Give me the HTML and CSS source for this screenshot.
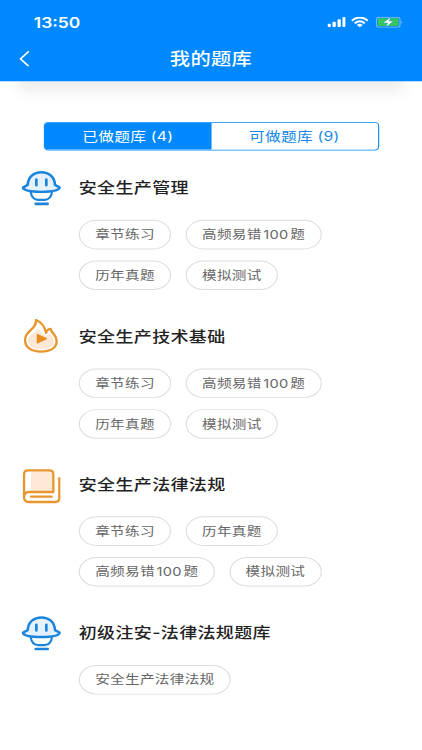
FILE: index.html
```
<!DOCTYPE html>
<html lang="zh-CN">
<head>
    <meta charset="UTF-8">
    <meta name="viewport" content="width=device-width, initial-scale=1.0">
    <title>我的题库</title>
    <link rel="stylesheet" href="styles.css">
</head>
<body>
    <svg class="sprite" width="0" height="0">
        <symbol id="robot" viewBox="0 0 120 114" preserveAspectRatio="none">
            <path d="M28 66 Q31 88 49 90 H71 Q89 88 92 66" fill="#fff" stroke="#1b84dc" stroke-width="6.500"/>
            <path d="M19 45 C20 20 38 7 60 7 S100 20 101 45 L116 53 Q111 66 60 66 T4 53 Z" fill="#e5f1fd" stroke="#1b84dc" stroke-width="7.500" stroke-linejoin="round"/>
            <path d="M45 29 V46 M75 29 V46" stroke="#1b84dc" stroke-width="8" stroke-linecap="round"/>
            <path d="M43 102 H79" stroke="#1b84dc" stroke-width="8" stroke-linecap="round"/>
        </symbol>
        <symbol id="fire" viewBox="0 0 120 114" preserveAspectRatio="none">
            <path d="M44 4 Q69 14 74 43 Q78 31 88 31 C90 44 106 49 106 68 C106 88 87 99 59 99 S11 87 11 64 C11 34 46 34 44 4 Z" fill="#fff" stroke="#e8962e" stroke-width="7" stroke-linejoin="round"/>
            <path d="M47 30 Q62 40 73 54 L86 43 Q97 55 98 69 C98 84 82 92 59 92 S20 85 19 67 C20 45 42 51 47 30 Z" fill="#fde9d6"/>
            <path d="M48 48 L75 60 L48 73 Z" fill="#e98d20" stroke="#e98d20" stroke-width="4" stroke-linejoin="round"/>
        </symbol>
        <symbol id="book" viewBox="0 0 120 114" preserveAspectRatio="none">
            <path d="M29 15 H93 V76 H29 Z" fill="#fde9d6"/>
            <path d="M8 90 V24 Q8 12 20 12 H84 Q96 12 96 24 V77 H22 Q8 77 8 92 Q8 107 22 107 H102 Q114 107 114 96 V35" fill="none" stroke="#e8962e" stroke-width="7" stroke-linecap="round" stroke-linejoin="round"/>
            <path d="M29 91 H91" stroke="#e8962e" stroke-width="7" stroke-linecap="round"/>
        </symbol>
    </svg>
    <div class="screen">
        <header class="header">
            <div class="statusBar">
                <span class="time">13:50</span>
                <svg class="signal" viewBox="0 0 56 33" preserveAspectRatio="none" fill="#fff">
                    <rect x="0" y="21" width="10" height="10" rx="3"/>
                    <rect x="15" y="15" width="10" height="16" rx="3"/>
                    <rect x="30" y="8" width="10" height="23" rx="3"/>
                    <rect x="45" y="1" width="10" height="30" rx="3"/>
                </svg>
                <svg class="wifi" viewBox="0 0 52 33" preserveAspectRatio="none" fill="none" stroke="#fff" stroke-width="6">
                    <path d="M2 12 Q26 -7 50 12"/>
                    <path d="M11 20 Q26 8 41 20"/>
                    <path d="M17 25 Q26 18 35 25 L26 32 Z" fill="#fff" stroke="none"/>
                </svg>
                <svg class="battery" viewBox="0 0 82 33" preserveAspectRatio="none">
                    <rect x="1.5" y="1.5" width="71" height="30" rx="8" fill="none" stroke="#7fbdf5" stroke-width="3"/>
                    <rect x="6" y="5" width="62" height="23" rx="4" fill="#35c75a"/>
                    <path d="M76 12 Q81 16.500 76 21 Z" fill="#7fbdf5"/>
                    <path d="M45 1 L21 19 H35 L30 32 L53 13 H40 Z" fill="#fff" stroke="#168fd8" stroke-width="1.500"/>
                </svg>
            </div>
            <div class="navBar">
                <svg class="back" viewBox="0 0 30 48" preserveAspectRatio="none">
                    <path d="M27 3 L4 24 L27 45" fill="none" stroke="#fff" stroke-width="5" stroke-linecap="round" stroke-linejoin="round"/>
                </svg>
                <h1 class="title">我的题库</h1>
            </div>
        </header>
        <div class="shadowStrip"><div class="shadowCard"></div></div>
        <div class="tabs">
            <div class="tab active">已做题库 (4)</div>
            <div class="tab">可做题库 (9)</div>
        </div>
        <main class="list">
            <section class="bank">
                <svg class="icon"><use href="#robot"/></svg>
                <div class="content">
                    <h2>安全生产管理</h2>
                    <div class="tags">
                        <span class="tag">章节练习</span>
                        <span class="tag">高频易错<span class="num">100</span>题</span>
                        <span class="tag">历年真题</span>
                        <span class="tag">模拟测试</span>
                    </div>
                </div>
            </section>
            <section class="bank">
                <svg class="icon"><use href="#fire"/></svg>
                <div class="content">
                    <h2>安全生产技术基础</h2>
                    <div class="tags">
                        <span class="tag">章节练习</span>
                        <span class="tag">高频易错<span class="num">100</span>题</span>
                        <span class="tag">历年真题</span>
                        <span class="tag">模拟测试</span>
                    </div>
                </div>
            </section>
            <section class="bank">
                <svg class="icon"><use href="#book"/></svg>
                <div class="content">
                    <h2>安全生产法律法规</h2>
                    <div class="tags">
                        <span class="tag">章节练习</span>
                        <span class="tag">历年真题</span>
                        <span class="tag">高频易错<span class="num">100</span>题</span>
                        <span class="tag">模拟测试</span>
                    </div>
                </div>
            </section>
            <section class="bank">
                <svg class="icon"><use href="#robot"/></svg>
                <div class="content">
                    <h2>初级注安-法律法规题库</h2>
                    <div class="tags">
                        <span class="tag">安全生产法律法规</span>
                    </div>
                </div>
            </section>
        </main>
    </div>
</body>
</html>
```
FILE: styles.css
```
* {
    box-sizing: border-box;
}
html {
    overflow: hidden;
}
body {
    margin: 0;
    height: 750px;
    overflow: hidden;
    background-color: #fff;
    font-family: Inter, "Noto Sans CJK SC", sans-serif;
}
.sprite {
    display: block;
}
/* 375x812 layout stretched over the 422x750 window */
.screen {
    width: 375px;
    height: 812px;
    margin-bottom: -62px;
    background-color: #fff;
    transform: scale(1.12533, 0.92365);
    transform-origin: 0 0;
}
.header {
    height: 88px;
    background-color: #0089ff;
    color: #fff;
}
.statusBar {
    display: flex;
    align-items: center;
    height: 44px;
    padding: 4px 17px 0 30px;
}
.time {
    flex: 1;
    font-size: 15.5px;
    font-weight: 600;
}
.signal {
    width: 16.6px;
    height: 12px;
    margin-right: 5px;
}
.wifi {
    width: 15.4px;
    height: 12px;
    margin-right: 6px;
}
.battery {
    width: 24.3px;
    height: 12px;
}
.navBar {
    display: flex;
    align-items: center;
    height: 44px;
    padding: 0 17px;
    margin-top: -4px;
}
.back {
    width: 9px;
    height: 17.3px;
    margin-top: 3px;
}
.title {
    flex: 1;
    margin: 0 9px 0 0;
    font-size: 18px;
    font-weight: 500;
    letter-spacing: 0.3px;
    text-align: center;
}
.shadowStrip {
    height: 30px;
    overflow: hidden;
}
.shadowCard {
    height: 20px;
    margin: -20px 16px 0;
    box-shadow: 0 11px 14px rgba(0, 0, 0, 0.075);
}
.tabs {
    display: flex;
    height: 31px;
    margin: 14px 38.500px 0;
    border: 1px solid #0089ff;
    border-radius: 4px;
    overflow: hidden;
}
.tab {
    flex: 1;
    color: #1688ea;
    font-size: 14px;
    line-height: 29px;
    letter-spacing: 0.2px;
    text-align: center;
}
.tab.active {
    background-color: #0089ff;
    color: #fff;
}
.list {
    display: flex;
    flex-direction: column;
    gap: 29.600px;
    padding: 20px 30px 0 18.500px;
}
.bank {
    display: flex;
    gap: 16px;
}
.icon {
    flex: none;
    width: 35.500px;
    height: 41px;
    margin-top: 1px;
}
h2 {
    margin: 0 0 15px;
    color: #222;
    font-size: 16px;
    font-weight: 500;
    line-height: 40px;
    letter-spacing: 0.3px;
}
.tags {
    display: flex;
    flex-wrap: wrap;
    gap: 12px 13px;
}
.tag {
    height: 32px;
    padding: 0 13.300px 0 13.600px;
    border: 1px solid #dcdde2;
    border-radius: 16px;
    color: #666;
    font-size: 13px;
    line-height: 31px;
    letter-spacing: 0.25px;
}
.num {
    margin: 0 1.500px;
}
```
